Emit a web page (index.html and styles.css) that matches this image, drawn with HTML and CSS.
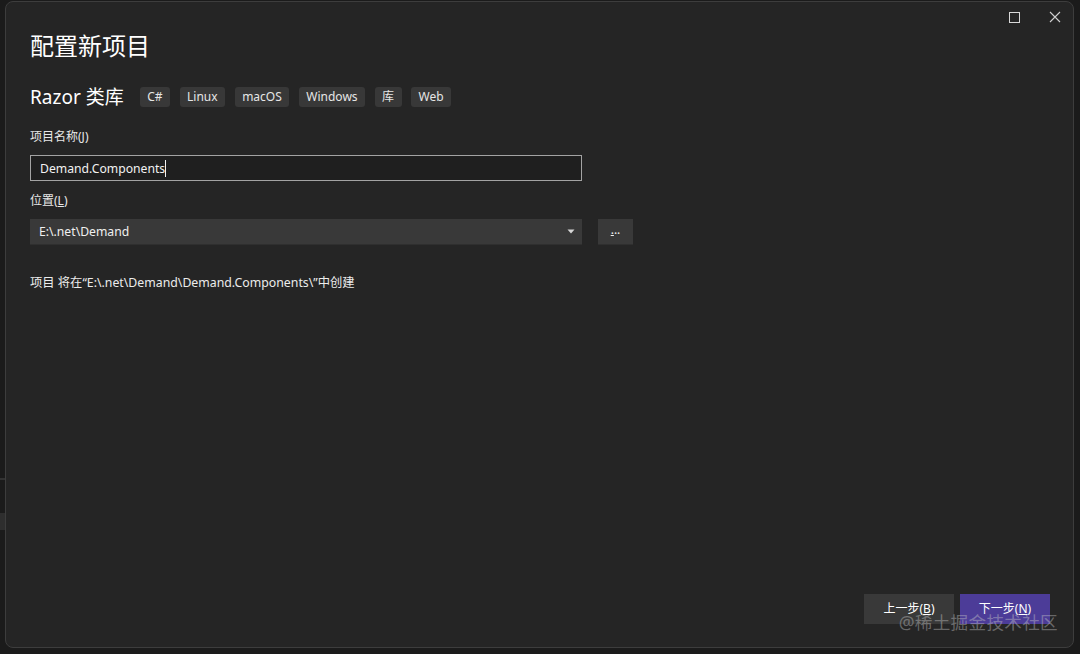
FILE: index.html
```html
<!DOCTYPE html>
<html lang="zh-CN">
<head>
<meta charset="utf-8">
<link rel="stylesheet" href="styles.css">
</head>
<body>
<div class="backdrop">
  <div class="bg-strip"><div class="bg-line"></div><div class="bg-band"></div></div>
  <div class="window">
    <div class="controls">
      <span class="ctl-max"></span>
      <svg class="ctl-close" width="12" height="12" viewBox="0 0 12 12"><path d="M1 1L11 11M11 1L1 11" stroke="#d0d0d0" stroke-width="1.1"/></svg>
    </div>
    <div class="content">
      <h1 class="title">配置新项目</h1>
      <div class="template-row">
        <span class="template-name">Razor 类库</span>
        <span class="tag">C#</span>
        <span class="tag">Linux</span>
        <span class="tag">macOS</span>
        <span class="tag">Windows</span>
        <span class="tag">库</span>
        <span class="tag">Web</span>
      </div>
      <div class="label label-first">项目名称(<u>J</u>)</div>
      <div class="input"><span class="caret">Demand.Components</span></div>
      <div class="label">位置(<u>L</u>)</div>
      <div class="loc-row">
        <div class="select"><span>E:\.net\Demand</span><svg class="arrow" width="8" height="5" viewBox="0 0 8 5"><path d="M0.5 0.5H7.5L4 4.5Z" fill="#d6d6d6"/></svg></div>
        <div class="browse"><u>.</u>..</div>
      </div>
      <div class="info">项目 将在“E:\.net\Demand\Demand.Components\”中创建</div>
    </div>
    <div class="footer">
      <div class="btn btn-back">上一步(<u>B</u>)</div>
      <div class="btn btn-next">下一步(<u>N</u>)</div>
      <div class="watermark">@稀土掘金技术社区</div>
    </div>
  </div>
</div>
</body>
</html>
```
FILE: styles.css
```css
html, body {
  margin: 0;
  padding: 0;
  background: #1b1b1b;
  width: 1080px;
  height: 654px;
  overflow: hidden;
}
body {
  font-family: "Noto Sans", "Noto Sans CJK SC", sans-serif;
  color: #f0f0f0;
}
.backdrop {
  position: relative;
  width: 1080px;
  height: 654px;
  padding: 1px 0 0 5px;
  box-sizing: border-box;
}
.bg-strip {
  position: absolute;
  left: 0;
  top: 478px;
  width: 5px;
}
.bg-line {
  height: 2px;
  background: #333;
}
.bg-band {
  margin-top: 33px;
  height: 17px;
  background: #2e2e2e;
}
.window {
  position: relative;
  width: 1069px;
  height: 647px;
  box-sizing: border-box;
  background: #252525;
  border: 1px solid #3d3d3d;
  border-radius: 8px;
  display: flex;
  flex-direction: column;
  justify-content: space-between;
}
.controls {
  position: absolute;
  top: 9px;
  right: 12px;
  display: flex;
  align-items: center;
  gap: 29px;
}
.ctl-max {
  width: 9px;
  height: 9px;
  border: 1px solid #d8d8d8;
}
.ctl-close {
  display: block;
}
.content {
  padding: 27px 0 0 24px;
  display: flex;
  flex-direction: column;
}
.title {
  margin: 0;
  font-size: 24px;
  line-height: 34px;
  font-weight: 400;
  color: #ffffff;
}
.template-row {
  margin-top: 24px;
  display: flex;
  align-items: center;
  height: 20px;
}
.template-name {
  font-size: 19px;
  line-height: 20px;
  color: #ffffff;
  margin-right: 16px;
}
.tag {
  height: 20px;
  line-height: 20px;
  padding: 0 7.5px;
  margin-right: 9.5px;
  background: #383838;
  border-radius: 3px;
  font-size: 12px;
  color: #e6e6e6;
}
.label {
  font-size: 12px;
  line-height: 16px;
  margin-top: 12px;
  margin-bottom: 10px;
  color: #e8e8e8;
}
.label-first {
  margin-top: 22px;
  margin-bottom: 10px;
}
.label u {
  text-underline-offset: 1px;
}
.input {
  width: 552px;
  height: 26px;
  box-sizing: border-box;
  border: 1px solid #a3a3a3;
  background: #1f1f1f;
  padding: 0 9px;
  display: flex;
  align-items: center;
  font-size: 12.2px;
  color: #f2f2f2;
}
.caret {
  border-right: 1px solid #f2f2f2;
  line-height: 17px;
}
.loc-row {
  display: flex;
  gap: 16px;
}
.select {
  width: 552px;
  height: 26px;
  box-sizing: border-box;
  background: #393939;
  border-bottom: 1px solid #2f2f2f;
  padding: 0 7px 0 9px;
  display: flex;
  align-items: center;
  justify-content: space-between;
  font-size: 12.2px;
  color: #f0f0f0;
}
.arrow {
  display: block;
}
.browse {
  width: 35px;
  height: 26px;
  box-sizing: border-box;
  background: #393939;
  border-bottom: 1px solid #2f2f2f;
  font-size: 12px;
  line-height: 22px;
  text-align: center;
  color: #f0f0f0;
}
.info {
  margin-top: 29px;
  font-size: 12.3px;
  line-height: 17px;
  color: #ececec;
}
.footer {
  position: relative;
  display: flex;
  justify-content: flex-end;
  gap: 6px;
  padding: 0 23px 23px 0;
}
.btn {
  width: 90px;
  height: 30px;
  line-height: 30px;
  text-align: center;
  font-size: 12px;
  color: #ffffff;
}
.btn-back {
  background: #393939;
}
.btn-next {
  background: #4c3c98;
}
.watermark {
  position: absolute;
  right: 15px;
  bottom: 14px;
  font-size: 17.6px;
  line-height: 22px;
  color: rgba(200, 200, 200, 0.42);
  letter-spacing: 0.3px;
}
```
